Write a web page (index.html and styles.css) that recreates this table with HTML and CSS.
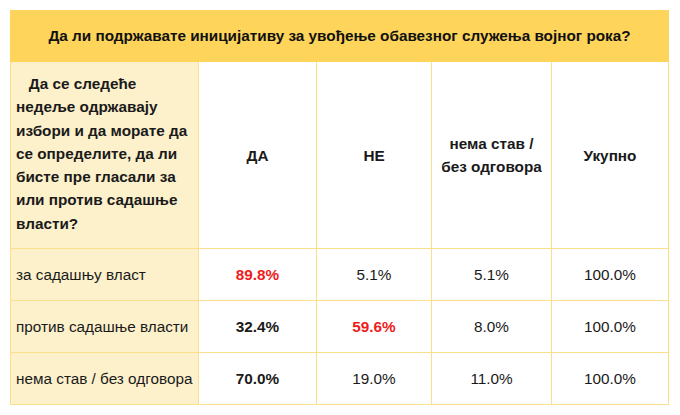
FILE: index.html
```html
<!DOCTYPE html>
<html lang="sr">
<head>
<meta charset="utf-8">
<link rel="stylesheet" href="styles.css">
</head>
<body>
<div class="wrap">
<table class="poll">
  <colgroup>
    <col class="c1"><col class="c2"><col class="c3"><col class="c4"><col class="c5">
  </colgroup>
  <thead>
    <tr><th colspan="5" class="title">Да ли подржавате иницијативу за увођење обавезног служења војног рока?</th></tr>
  </thead>
  <tbody>
    <tr class="head">
      <td class="label q">&nbsp;&nbsp; Да се следеће недеље одржавају избори и да морате да се определите, да ли бисте пре гласали за или против садашње власти?</td>
      <td class="b">ДА</td>
      <td class="b">НЕ</td>
      <td class="b">нема став /<br>без одговора</td>
      <td class="b">Укупно</td>
    </tr>
    <tr class="row">
      <td class="label">за садашњу власт</td>
      <td class="b red">89.8%</td>
      <td>5.1%</td>
      <td>5.1%</td>
      <td>100.0%</td>
    </tr>
    <tr class="row">
      <td class="label">против садашње власти</td>
      <td class="b">32.4%</td>
      <td class="b red">59.6%</td>
      <td>8.0%</td>
      <td>100.0%</td>
    </tr>
    <tr class="row">
      <td class="label">нема став / без одговора</td>
      <td class="b">70.0%</td>
      <td>19.0%</td>
      <td>11.0%</td>
      <td>100.0%</td>
    </tr>
  </tbody>
</table>
</div>
</body>
</html>
```
FILE: styles.css
```css
html, body {
  margin: 0;
  padding: 0;
  background: #ffffff;
}
.wrap {
  padding: 10px 12px 0 10px;
}
.poll {
  border-collapse: collapse;
  table-layout: fixed;
  width: 658px;
  font-family: "Liberation Sans", Arial, sans-serif;
  font-size: 15.3px;
  color: #1a1a1a;
}
.c1 { width: 188px; }
.c2 { width: 118px; }
.c3 { width: 115px; }
.c4 { width: 120px; }
.c5 { width: 117px; }
.poll td, .poll th {
  border: 1px solid #fbe08c;
  text-align: center;
  vertical-align: middle;
  padding: 0 6px;
}
.title {
  background: #fed45a;
  border-color: #fed45a !important;
  height: 50px;
  font-weight: bold;
  color: #111;
}
.label {
  background: #fdf1cc;
  text-align: left !important;
  padding-left: 5px !important;
  padding-right: 0 !important;
  white-space: nowrap;
}
.q {
  white-space: normal;
  font-weight: bold;
  line-height: 23.3px;
  padding-top: 10px !important;
  padding-bottom: 13px !important;
  padding-right: 8px !important;
}
.head .b {
  line-height: 23px;
}
.row td {
  height: 51px;
}
.b { font-weight: bold; }
.red { color: #ee1c1c; }
```
